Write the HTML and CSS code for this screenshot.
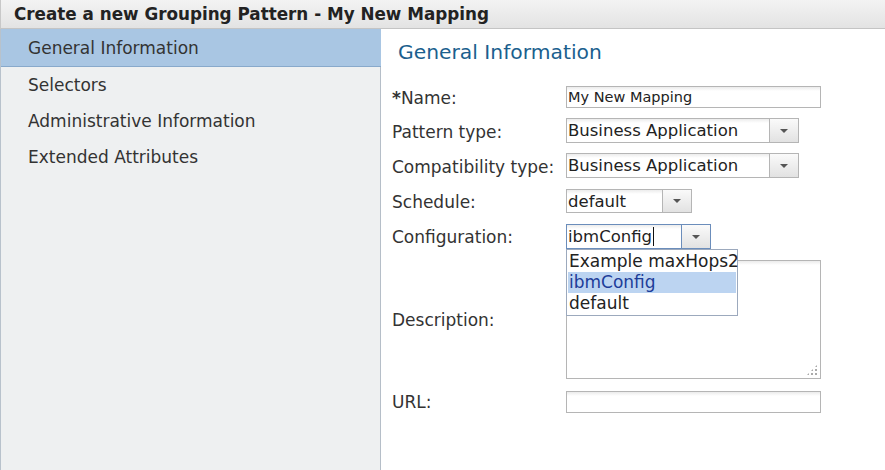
FILE: index.html
```html
<!DOCTYPE html>
<html>
<head>
<meta charset="utf-8">
<link rel="stylesheet" href="styles.css">
</head>
<body>
<div class="dialog">
  <div class="titlebar">Create a new Grouping Pattern - My New Mapping</div>
  <div class="content">
    <nav class="sidebar">
      <div class="nav-item selected">General Information</div>
      <div class="nav-item">Selectors</div>
      <div class="nav-item">Administrative Information</div>
      <div class="nav-item">Extended Attributes</div>
    </nav>
    <main class="main">
      <h1 class="heading">General Information</h1>
      <div class="form">
        <label class="label"><span class="req">*</span>Name:</label>
        <div class="field"><div class="textbox name-box">My New Mapping</div></div>

        <label class="label">Pattern type:</label>
        <div class="field"><div class="select wide"><span class="sel-text">Business Application</span><span class="arrow"><span class="tri"></span></span></div></div>

        <label class="label">Compatibility type:</label>
        <div class="field"><div class="select wide"><span class="sel-text">Business Application</span><span class="arrow"><span class="tri"></span></span></div></div>

        <label class="label">Schedule:</label>
        <div class="field shift1"><div class="select narrow"><span class="sel-text">default</span><span class="arrow"><span class="tri"></span></span></div></div>

        <label class="label">Configuration:</label>
        <div class="field config-field shift1">
          <div class="select config focused"><span class="sel-text">ibmConfig<span class="caret"></span></span><span class="arrow"><span class="tri"></span></span></div>
          <div class="menu">
            <div class="opt">Example maxHops2</div>
            <div class="opt hl">ibmConfig</div>
            <div class="opt">default</div>
          </div>
        </div>

        <label class="label">Description:</label>
        <div class="field shift1"><div class="textarea"><span class="grip"></span></div></div>

        <label class="label">URL:</label>
        <div class="field shift2"><div class="textbox url-box"></div></div>
      </div>
    </main>
  </div>
</div>
</body>
</html>
```

FILE: styles.css
```css
* { box-sizing: border-box; }
html, body { margin: 0; padding: 0; background: #fff; }
body {
  width: 885px;
  height: 470px;
  overflow: hidden;
  font-family: "DejaVu Sans", Verdana, sans-serif;
  color: #333;
}
.dialog { display: flex; flex-direction: column; height: 470px; }
.titlebar {
  height: 29px;
  flex: none;
  padding: 4px 0 0 13px;
  line-height: 20px;
  font-size: 16.8px;
  font-weight: bold;
  color: #222;
  background: linear-gradient(#f3f3f3, #e3e3e3);
  border-bottom: 1px solid #c4c4c4;
  border-left: 1px solid #c8c8c8;
  white-space: nowrap;
}
.content { display: flex; flex: 1; }
.sidebar {
  width: 381px;
  flex: none;
  background: #eef0f1;
  border-left: 1px solid #b8c2cc;
  border-right: 1px solid #b5bec8;
}
.nav-item {
  height: 36px;
  padding: 8px 0 0 27px;
  line-height: 20px;
  font-size: 17px;
  color: #333;
  white-space: nowrap;
}
.nav-item.selected {
  height: 38px;
  padding-top: 9px;
  background: #a9c6e3;
  border-bottom: 1px solid #88a9cb;
  margin-right: -1px;
}
.main { flex: 1; padding: 0 0 0 11px; }
.heading {
  margin: 0;
  height: 57px;
  padding: 11px 0 0 6px;
  line-height: 24px;
  font-size: 20.3px;
  font-weight: normal;
  color: #1b5f8e;
  white-space: nowrap;
}
.form {
  display: grid;
  grid-template-columns: 174px 1fr;
  row-gap: 10px;
  align-items: center;
}
.label { font-size: 17px; color: #333; white-space: nowrap; padding-top: 2px; }
.req { font-weight: bold; }
.field { position: relative; }
.shift1 { margin-top: 1px; }
.shift2 { margin-top: 2px; }
.textbox {
  height: 22px;
  width: 255px;
  border: 1px solid #b5b5b5;
  background: linear-gradient(#ebebeb, #fff 4px);
  font-size: 14.5px;
  line-height: 18px;
  padding: 1px 0 0 1px;
  color: #222;
  white-space: nowrap;
}
.select {
  display: flex;
  height: 25px;
  border: 1px solid #b5b5b5;
  background: linear-gradient(#ececec, #fff 4px);
  font-size: 16.5px;
  line-height: 21px;
  color: #222;
}
.select.wide { width: 233px; }
.select.narrow { width: 126px; height: 24px; }
.select.config { width: 145px; }
.select.focused { border-color: #6b8dbb; }
.sel-text { flex: 1; padding: 1px 0 0 1px; white-space: nowrap; }
.arrow {
  width: 29px;
  flex: none;
  border-left: 1px solid #b5b5b5;
  background: linear-gradient(#fafafa, #e2e2e2);
  display: flex;
  align-items: center;
  justify-content: center;
}
.focused .arrow { border-left-color: #6b8dbb; }
.tri {
  width: 0; height: 0;
  border-left: 4px solid transparent;
  border-right: 4px solid transparent;
  border-top: 4px solid #555;
}
.caret {
  display: inline-block;
  width: 1px;
  height: 19px;
  background: #111;
  vertical-align: -4px;
  margin-left: 1px;
}
.menu {
  position: absolute;
  left: 0;
  top: 25px;
  width: 172px;
  z-index: 2;
  background: #fff;
  border: 1px solid #9ca9bd;
  padding: 1px;
  font-size: 17px;
  color: #222;
}
.opt { height: 21px; line-height: 21px; padding-left: 1px; white-space: nowrap; }
.opt.hl { background: #bcd4f1; color: #1d3d99; }
.textarea {
  position: relative;
  width: 255px;
  height: 119px;
  border: 1px solid #b5b5b5;
  background: linear-gradient(#ebebeb, #fff 4px);
}
.grip {
  position: absolute;
  right: 2px;
  bottom: 2px;
  width: 12px;
  height: 12px;
  background:
    radial-gradient(circle, #aaa 1px, transparent 1.2px) 0 0 / 4px 4px;
  clip-path: polygon(100% 0, 100% 100%, 0 100%);
}
```
